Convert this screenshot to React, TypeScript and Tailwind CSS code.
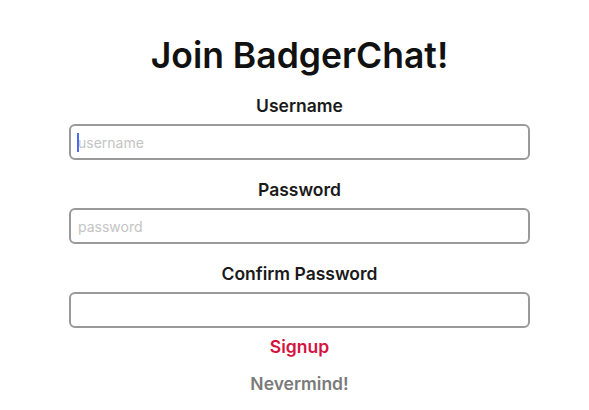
import React from 'react';

const Field = ({ label, placeholder, type, caret }: { label: string; placeholder?: string; type: string; caret?: boolean }) => (
  <div className="flex flex-col items-center">
    <label className="text-[17.5px] font-semibold text-[#1a1a1a] leading-6 mb-[6px]">{label}</label>
    <div className="relative w-[461px]">
      <input
        type={type}
        placeholder={placeholder}
        className="w-full h-[36px] rounded-[6px] border-2 border-[#9a9a9a] bg-white px-[7px] text-[14px] outline-none placeholder:text-[#c4c4c4]"
      />
      {caret && <div className="absolute left-[8px] top-[9px] w-[2px] h-[19px] bg-[#4a6cf0]" />}
    </div>
  </div>
);

export default function App() {
  return (
    <div className="w-[589px] h-[410px] bg-white flex flex-col items-center pt-[33px] pl-[10px]" style={{ fontFamily: 'Inter, "Noto Sans", sans-serif' }}>
      <h1 className="text-[35.5px] font-semibold text-[#111] leading-[46px] mb-[15px]">Join BadgerChat!</h1>
      <div className="flex flex-col gap-[18px]">
        <Field label="Username" placeholder="username" type="text" caret />
        <Field label="Password" placeholder="password" type="password" />
        <Field label="Confirm Password" type="password" />
      </div>
      <button className="mt-[7px] text-[17.5px] font-semibold text-[#d4123e] leading-6">Signup</button>
      <button className="mt-[13px] text-[17.5px] font-semibold text-[#7a7a7a] leading-6">Nevermind!</button>
    </div>
  );
}
